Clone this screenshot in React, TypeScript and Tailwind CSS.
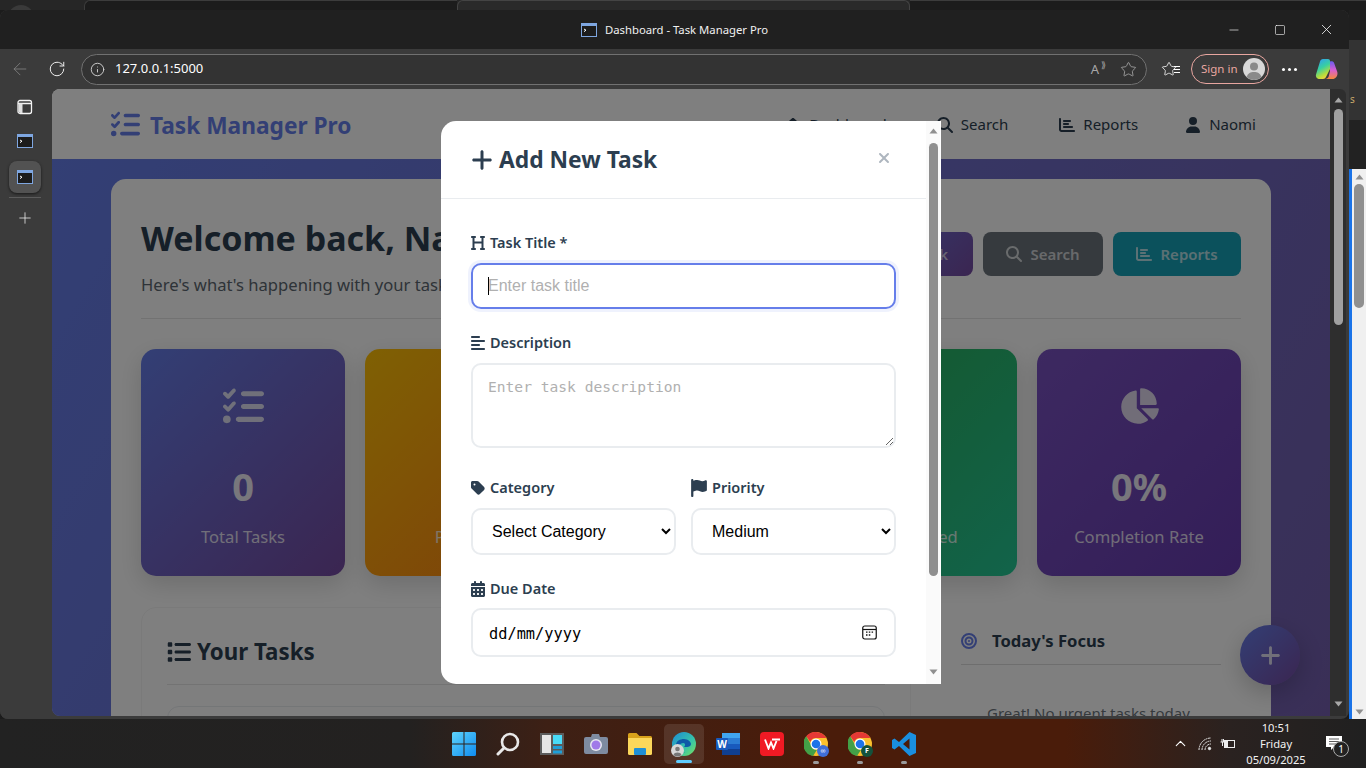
import React from "react";
import { ArrowLeft, RotateCw, Info, Star, Plus, X, Square, Minus, ChevronUp } from "lucide-react";
import { FaListCheck, FaPlus, FaHeading, FaAlignLeft, FaTag, FaFlag, FaCalendarDays, FaMagnifyingGlass, FaChartBar, FaUser, FaChartPie, FaList, FaBullseye, FaXmark, FaHouse, FaClock, FaSpinner, FaCircleCheck } from "react-icons/fa6";

const ui = { fontFamily: '"Noto Sans", "Liberation Sans", sans-serif' };

function TermIcon({ size = 16 }: { size?: number }) {
  return (
    <svg width={size} height={size} viewBox="0 0 16 16">
      <rect x="0.5" y="1.5" width="15" height="13" fill="#1c1c1c" stroke="#7ea6e0" />
      <rect x="0.5" y="1.5" width="15" height="2.5" fill="#7ea6e0" />
      <path d="M3 7l2 1.2L3 9.6" stroke="#fff" strokeWidth="1" fill="none" />
    </svg>
  );
}

function Triangle({ down, color = "#8f8f8f" }: { down?: boolean; color?: string }) {
  return (
    <svg width="9" height="6" viewBox="0 0 9 6">
      <path d={down ? "M0.5 0.5h8L4.5 5.5z" : "M4.5 0.5l4 5h-8z"} fill={color} />
    </svg>
  );
}

function TopStrip() {
  return (
    <div className="h-[10px] bg-[#262626] flex items-start shrink-0 overflow-hidden">
      <div className="ml-[8px] mt-[5px] w-[26px] h-[26px] rounded-full bg-[#3a3a3a] shrink-0" />
      <div className="ml-[50px] w-[300px] h-[10px] bg-[#1c1c1c] rounded-tl-[6px] border-t border-l border-[#3c3c3c]" />
      <div className="w-[76px] h-[10px] bg-[#1c1c1c] border-t border-[#3c3c3c]" />
      <div className="w-[458px] h-[10px] bg-[#2a2a2a] border-t border-l border-r border-[#444] rounded-t-[6px]" />
      <div className="w-[460px] h-[10px] bg-[#1c1c1c] border-t border-[#3c3c3c]" />
    </div>
  );
}

function TitleBar() {
  return (
    <div className="h-[39px] bg-[#202020] flex items-center relative shrink-0 pt-[1px]">
      <div className="flex-1 flex items-center justify-center gap-[8px] text-[11.3px] text-[#f0f0f0]" style={ui}>
        <TermIcon />
        <span>Dashboard - Task Manager Pro</span>
      </div>
      <div className="absolute right-0 top-0 h-full flex items-center text-white">
        <div className="w-[46px] flex justify-center"><Minus size={14} strokeWidth={1.1} /></div>
        <div className="w-[46px] flex justify-center"><Square size={12} strokeWidth={1.2} /></div>
        <div className="w-[46px] flex justify-center"><X size={17} strokeWidth={1.1} /></div>
      </div>
    </div>
  );
}

function Toolbar() {
  return (
    <div className="h-[40px] bg-[#3b3b3b] flex items-center shrink-0" style={ui}>
      <div className="w-[40px] flex justify-center"><ArrowLeft size={20} strokeWidth={0.9} color="#8a8a8a" /></div>
      <div className="w-[34px] flex justify-center pr-[1px]"><RotateCw size={18} strokeWidth={1.3} color="#f2f2f2" /></div>
      <div className="ml-[7px] w-[1066px] h-[31px] rounded-full border border-[#717171] bg-[#333333] flex items-center pl-[8px] pr-[9px]">
        <Info size={15} strokeWidth={1.4} color="#dcdcdc" />
        <span className="ml-[10px] text-[13px] text-white">127.0.0.1:5000</span>
        <span className="ml-auto mr-[21px] relative text-[13px] text-[#a8a8a8] leading-none">A<span className="absolute -top-[3px] left-[10px] text-[9px]">⟫</span></span>
        <Star size={17} strokeWidth={1.1} color="#b0b0b0" />
      </div>
      <div className="ml-[14px] relative">
        <Star size={16} strokeWidth={1.3} color="#f0f0f0" />
        <div className="absolute right-[-3px] top-[5px] flex flex-col gap-[2px]">
          <div className="w-[6px] h-[1px] bg-white" />
          <div className="w-[6px] h-[1px] bg-white" />
          <div className="w-[6px] h-[1px] bg-white" />
        </div>
      </div>
      <div className="ml-[14px] w-[78px] h-[30px] rounded-full border border-[#e8a6a0] flex items-center pl-[9px] pr-[3px] justify-between">
        <span className="text-[11.5px] text-[#eaa8a2]">Sign in</span>
        <svg width="22" height="22" viewBox="0 0 22 22">
          <circle cx="11" cy="11" r="11" fill="#d8d8d8" />
          <circle cx="11" cy="8.5" r="4" fill="#8a8a8a" />
          <path d="M3.5 19c1.5-4 4-5 7.5-5s6 1 7.5 5a11 11 0 0 1-15 0z" fill="#8a8a8a" />
        </svg>
      </div>
      <div className="ml-[13px] flex gap-[3px]">
        <div className="w-[3px] h-[3px] rounded-full bg-white" />
        <div className="w-[3px] h-[3px] rounded-full bg-white" />
        <div className="w-[3px] h-[3px] rounded-full bg-white" />
      </div>
      <svg className="ml-[18px]" width="23" height="22" viewBox="0 0 23 22">
        <defs>
          <linearGradient id="cp1" x1="0.2" y1="0" x2="0.6" y2="1"><stop offset="0" stopColor="#2f9ff0" /><stop offset="0.45" stopColor="#38d0a0" /><stop offset="0.8" stopColor="#b8dc3c" /><stop offset="1" stopColor="#f5d33f" /></linearGradient>
          <linearGradient id="cp2" x1="0.5" y1="0" x2="0.5" y2="1"><stop offset="0" stopColor="#6a5cf0" /><stop offset="0.5" stopColor="#d85fd0" /><stop offset="1" stopColor="#f58a3c" /></linearGradient>
        </defs>
        <path d="M8 1h5c1.2 0 2 .8 2 2v8l-4 8c-.6 1.3-1.5 2-3 2H5C2 21 .4 19 1 16.5L5 3.5C5.4 2 6.5 1 8 1z" fill="url(#cp1)" />
        <path d="M15 3.5c2-.5 3.5 0 4.2 1.800L22.3 14c.8 3.500-1.300 7-4.800 7H10c2 0 3-1 3.700-2.500L15 13z" fill="url(#cp2)" />
      </svg>
    </div>
  );
}

function Sidebar() {
  return (
    <div className="w-[52px] shrink-0 bg-[#3b3b3b] flex flex-col items-center pt-[10px] pr-[2px]">
      <svg width="16" height="16" viewBox="0 0 16 16">
        <rect x="1" y="1.5" width="13.5" height="13" rx="2" fill="none" stroke="#f4f4f4" strokeWidth="1.3" />
        <path d="M1 4.5h13.5" stroke="#f4f4f4" strokeWidth="1.3" />
        <path d="M1.5 4.5h4v9.500h-2a2 2 0 0 1-2-2z" fill="#e0e0e0" />
      </svg>
      <div className="mt-[18px]"><TermIcon /></div>
      <div className="mt-[12px] w-[32px] h-[32px] rounded-[8px] bg-[#525252] shadow-[0_1px_3px_rgba(0,0,0,0.6)] flex items-center justify-center"><TermIcon /></div>
      <div className="mt-[4px] w-[32px] h-[1px] bg-[#5c5c5c]" />
      <div className="mt-[11px]"><Plus size={18} strokeWidth={1} color="#f4f4f4" /></div>
    </div>
  );
}

function NavItem({ icon, label, className }: { icon: React.ReactNode; label: string; className: string }) {
  return (
    <div className={"flex items-center gap-[8px] text-[15px] text-[#2c3e50] " + className}>
      {icon}
      <span>{label}</span>
    </div>
  );
}

function Navbar() {
  return (
    <div className="h-[70px] bg-white flex items-center pl-[59px] pr-[74px] shrink-0">
      <FaListCheck size={29} className="text-[#667eea]" />
      <span className="ml-[10px] mt-[5px] text-[22.7px] font-bold text-[#667eea]">Task Manager Pro</span>
      <div className="ml-auto flex items-center mt-[1px]">
        <NavItem icon={<FaHouse size={16} />} label="Dashboard" className="mr-[50px]" />
        <NavItem icon={<FaMagnifyingGlass size={16} />} label="Search" className="mr-[51px]" />
        <NavItem icon={<FaChartBar size={16} />} label="Reports" className="mr-[47px]" />
        <NavItem icon={<FaUser size={16} />} label="Naomi" className="" />
      </div>
    </div>
  );
}

const stats = [
  { icon: <FaListCheck size={41} />, value: "0", label: "Total Tasks", bg: "bg-[linear-gradient(135deg,#667eea,#764ba2)]" },
  { icon: <FaClock size={41} />, value: "0", label: "Pending", bg: "bg-[linear-gradient(135deg,#ffc107,#fd7e14)]" },
  { icon: <FaSpinner size={41} />, value: "0", label: "In Progress", bg: "bg-[linear-gradient(135deg,#17a2b8,#6f42c1)]" },
  { icon: <FaCircleCheck size={41} />, value: "0", label: "Completed", bg: "bg-[linear-gradient(135deg,#2bae55,#24c795)]" },
  { icon: <FaChartPie size={40} />, value: "0%", label: "Completion Rate", bg: "bg-[linear-gradient(135deg,#7a52c2,#673cb0)]" },
];

function StatCard({ icon, value, label, bg }: { icon: React.ReactNode; value: string; label: string; bg: string }) {
  return (
    <div className={"w-[204px] h-[227px] rounded-[15px] flex flex-col items-center text-white shadow-[0_8px_25px_rgba(0,0,0,0.15)] pt-[37px] " + bg}>
      <div className="h-[40px] flex items-center opacity-80">{icon}</div>
      <div className="mt-[36px] text-[38px] leading-[48px] font-bold opacity-90">{value}</div>
      <div className="mt-[15px] text-[16.6px] leading-[24px] opacity-80">{label}</div>
    </div>
  );
}

function ActionButton({ icon, label, bg, w }: { icon: React.ReactNode; label: string; bg: string; w: string }) {
  return (
    <div className={"h-[44px] rounded-[8px] flex items-center justify-center gap-[8px] text-[15px] font-semibold text-white/70 " + bg + " " + w}>
      {icon}
      <span>{label}</span>
    </div>
  );
}

function Dashboard() {
  return (
    <div className="flex-1 min-h-0 overflow-hidden bg-[linear-gradient(120deg,#667eea,#745fae)] px-[59px] pt-[20px]">
      <div className="bg-white rounded-[15px] px-[30px] pt-[30px] h-[700px]">
        <div className="flex items-start justify-between h-[110px] border-b border-[#e4e4e4]">
          <div>
            <div className="text-[34px] leading-[58px] font-bold text-[#2c3e50] whitespace-nowrap">Welcome back, Naomi!</div>
            <div className="mt-[6px] text-[16.6px] leading-[24px] text-[#5c6770]">Here's what's happening with your tasks today</div>
          </div>
          <div className="flex gap-[10px] mt-[23px]">
            <ActionButton icon={<FaPlus size={15} />} label="Add Task" bg="bg-[linear-gradient(135deg,#667eea,#764ba2)]" w="w-[138px]" />
            <ActionButton icon={<FaMagnifyingGlass size={16} />} label="Search" bg="bg-[#6c757d]" w="w-[120px]" />
            <ActionButton icon={<FaChartBar size={16} />} label="Reports" bg="bg-[#17a2b8]" w="w-[128px]" />
          </div>
        </div>
        <div className="mt-[30px] flex gap-[20px]">
          {stats.map((s) => <StatCard key={s.label} {...s} />)}
        </div>
        <div className="mt-[31px] grid grid-cols-[770px_300px] gap-[30px]">
          <div className="border border-[#f4f4f4] rounded-[15px] px-[25px] pt-[25px] h-[200px]">
            <div className="flex items-center gap-[6px] h-[38px] text-[22.3px] font-bold text-[#2c3e50]"><FaList size={24} />Your Tasks</div>
            <div className="mt-[13px] h-[1px] bg-[#e6e6e6]" />
            <div className="mt-[21px] h-[60px] border border-[#e9ecef] rounded-[12px]" />
          </div>
          <div className="pl-[20px] pr-[20px] pt-[20px]">
            <div className="flex items-center gap-[15px] h-[28px] text-[16.6px] font-bold text-[#2c3e50]"><FaBullseye size={16} className="text-[#667eea]" />Today's Focus</div>
            <div className="mt-[9px] h-[1px] bg-[#dcdcdc]" />
            <div className="mt-[36px] pl-[26px] text-[15px] leading-[24px] text-[#6c757d] whitespace-nowrap">Great! No urgent tasks today</div>
          </div>
        </div>
      </div>
    </div>
  );
}

function Label({ icon, text, className = "" }: { icon: React.ReactNode; text: string; className?: string }) {
  return (
    <div className={"h-[24px] -ml-[1px] flex items-center gap-[4px] text-[14.5px] font-semibold text-[#2c3e50] " + className}>
      {icon}
      <span>{text}</span>
    </div>
  );
}

const arial = { fontFamily: '"Liberation Sans", Arial, sans-serif' };
const mono = { fontFamily: '"DejaVu Sans Mono", monospace' };

function Modal() {
  return (
    <div className="w-[500px] h-[563px] bg-white rounded-l-[15px] overflow-hidden flex" style={ui}>
      <div className="w-[485px] shrink-0 flex flex-col">
        <div className="h-[78px] border-b border-[#e9ecef] flex items-center px-[30px] shrink-0">
          <FaPlus size={24} className="-ml-[1px] text-[#2c3e50]" />
          <span className="ml-[5px] mt-[1px] text-[22.8px] font-bold text-[#2c3e50]">Add New Task</span>
          <FaXmark size={16} className="ml-auto mr-[4px] -mt-[4px] text-[#aeb6bf]" />
        </div>
        <div className="px-[30px] pt-[32px]">
          <Label icon={<FaHeading size={16} />} text="Task Title *" />
          <div className="relative mt-[8px]">
            <input
              autoFocus
              placeholder="Enter task title"
              className="block w-full h-[46px] rounded-[10px] border-2 border-[#667eea] px-[15px] text-[16px] outline-none caret-transparent shadow-[0_0_0_3px_rgba(102,126,234,0.1)] placeholder:text-[#b0b0b0]"
              style={arial}
            />
            <div className="absolute left-[17px] top-[14px] w-[1px] h-[18px] bg-black" />
          </div>
          <Label icon={<FaAlignLeft size={16} />} text="Description" className="mt-[22px]" />
          <textarea
            placeholder="Enter task description"
            className="mt-[8px] block w-full h-[85px] rounded-[10px] border-2 border-[#e9ecef] px-[15px] pt-[11px] pb-[12px] text-[14.6px] outline-none placeholder:text-[#b0b0b0]"
            style={mono}
          />
          <div className="mt-[28px] grid grid-cols-2 gap-[15px]">
            <div>
              <Label icon={<FaTag size={16} />} text="Category" />
              <select className="mt-[8px] block w-full h-[47px] rounded-[10px] border-2 border-[#e9ecef] px-[15px] text-[16px] text-black outline-none" style={arial}>
                <option>Select Category</option>
              </select>
            </div>
            <div>
              <Label icon={<FaFlag size={18} />} text="Priority" />
              <select className="mt-[8px] block w-full h-[47px] rounded-[10px] border-2 border-[#e9ecef] px-[15px] text-[16px] text-black outline-none" style={arial}>
                <option>Medium</option>
              </select>
            </div>
          </div>
          <Label icon={<FaCalendarDays size={16} />} text="Due Date" className="mt-[22px]" />
          <div className="mt-[7px] h-[49px] rounded-[10px] border-2 border-[#e9ecef] pl-[16px] pr-[17px] flex items-center justify-between">
            <span className="mt-[4px] text-[15.3px] text-black" style={mono}>dd/mm/yyyy</span>
            <svg width="15" height="15" viewBox="0 0 15 15">
              <rect x="0.75" y="1" width="13.5" height="13" rx="2" fill="none" stroke="#111" strokeWidth="1.2" />
              <path d="M1 4.5h13" stroke="#111" strokeWidth="1.2" />
              <path d="M4 7.2h1.5M6.8 7.2h1.5M9.6 7.2h1.5M4 10h1.5M6.8 10h1.5" stroke="#111" strokeWidth="1.3" />
            </svg>
          </div>
        </div>
      </div>
      <div className="flex-1 flex">
        <div className="w-[14px] bg-[#fafafa] flex flex-col items-center pt-[7px] pb-[9px]">
          <Triangle />
          <div className="mt-[9px] w-[9px] h-[433px] rounded-full bg-[#8f8f8f]" />
          <div className="mt-auto"><Triangle down /></div>
        </div>
        <div className="flex-1 bg-white" />
      </div>
    </div>
  );
}

function PageScrollbar() {
  return (
    <div className="w-[16px] shrink-0 bg-[#2e2e2e] flex flex-col items-center pt-[8px] pb-[9px] rounded-tr-[6px]">
      <Triangle color="#a8a8a8" />
      <div className="mt-[6px] w-[9px] h-[216px] rounded-full bg-[#a0a0a0]" />
      <div className="mt-auto"><Triangle down color="#a8a8a8" /></div>
    </div>
  );
}

function BrowserWindow() {
  return (
    <div className="w-[1349px] shrink-0 flex flex-col bg-[#3b3b3b] rounded-t-[8px] rounded-b-[8px] overflow-hidden">
      <TitleBar />
      <Toolbar />
      <div className="flex-1 min-h-0 flex">
        <Sidebar />
        <div className="flex-1 min-w-0 flex pb-[3px] pr-[3px]">
          <div className="w-[1278px] shrink-0 relative flex flex-col overflow-hidden rounded-tl-[8px] rounded-bl-[8px]" style={ui}>
            <Navbar />
            <Dashboard />
            <div className="absolute right-[30px] bottom-[31px] w-[60px] h-[60px] rounded-full bg-[linear-gradient(135deg,#667eea,#764ba2)] flex items-center justify-center text-white shadow-[0_8px_25px_rgba(0,0,0,0.2)]">
              <FaPlus size={23} className="opacity-80" />
            </div>
            <div className="absolute inset-0 bg-black/50 flex items-center justify-center">
              <Modal />
            </div>
          </div>
          <PageScrollbar />
        </div>
      </div>
    </div>
  );
}

function RightEdge() {
  return (
    <div className="flex-1 flex flex-col relative overflow-hidden" style={ui}>
      <div className="h-[30px] bg-[#1f1f1f] shrink-0" />
      <div className="h-[80px] bg-[#333333] shrink-0 text-[10px] text-[#c9a86a] pt-[52px] pl-[1px]">s</div>
      <div className="h-[49px] bg-[#222222] shrink-0" />
      <div className="flex-1 flex bg-white">
        <div className="w-[3px] bg-[#1a73e8]" />
        <div className="flex-1 bg-[#f0f0f0] flex flex-col items-center pt-[5px] pb-[4px]">
          <Triangle />
          <div className="mt-[4px] w-[10px] h-[124px] rounded-full bg-[#8f8f8f]" />
          <div className="mt-auto"><Triangle down /></div>
        </div>
      </div>
    </div>
  );
}

function TaskIcon({ children, active, dot }: { children: React.ReactNode; active?: boolean; dot?: boolean }) {
  return (
    <div className={"relative w-[40px] h-[40px] rounded-[5px] flex items-center justify-center mx-[2px] " + (active ? "bg-white/10" : "")}>
      {children}
      {active && <div className="absolute bottom-[1px] left-[12px] w-[16px] h-[3px] rounded-full bg-[#60cdff]" />}
      {dot && <div className="absolute bottom-[0px] left-[17px] w-[6px] h-[3px] rounded-full bg-[#9a9a9a]" />}
    </div>
  );
}

function Chrome({ badge }: { badge: React.ReactNode }) {
  return (
    <div className="relative w-[24px] h-[24px]">
      <svg width="24" height="24" viewBox="0 0 24 24">
        <circle cx="12" cy="12" r="12" fill="#fbc02d" />
        <path d="M12 0a12 12 0 0 1 10.4 6H12a6 6 0 0 0-5.7 4.1L2.2 4.3A12 12 0 0 1 12 0z" fill="#e53935" />
        <path d="M2.2 4.3l5.2 9.3a5.5 5.5 0 0 0 5.5 4.3L9 24A12 12 0 0 1 2.2 4.3z" fill="#43a047" />
        <circle cx="12" cy="12" r="5.5" fill="#fff" />
        <circle cx="12" cy="12" r="4.3" fill="#1e73e8" />
      </svg>
      {badge}
    </div>
  );
}

function Taskbar() {
  return (
    <div className="h-[49px] shrink-0 flex items-center relative bg-[linear-gradient(90deg,#222222_0%,#232120_30%,#3d2015_40%,#4a1c0a_60%,#4a1c0a_78%,#2a2220_90%,#202020_100%)]" style={ui}>
      <div className="flex items-center ml-[442px]">
        <TaskIcon>
          <svg width="24" height="24" viewBox="0 0 24 24">
            <defs><linearGradient id="win" x1="0" y1="0" x2="1" y2="1"><stop offset="0" stopColor="#5ed4fb" /><stop offset="1" stopColor="#0f8cf0" /></linearGradient></defs>
            <path d="M0 1.5A1.5 1.5 0 0 1 1.5 0h10v11.5H0zM12.5 0h10A1.5 1.5 0 0 1 24 1.5v10H12.5zM0 12.5h11.5V24h-10A1.5 1.5 0 0 1 0 22.5zM12.5 12.5H24v10a1.5 1.5 0 0 1-1.5 1.5h-10z" fill="url(#win)" />
          </svg>
        </TaskIcon>
        <TaskIcon>
          <svg width="24" height="24" viewBox="0 0 24 24" fill="none">
            <circle cx="14" cy="10" r="8" stroke="#e8e8e8" strokeWidth="2.6" />
            <path d="M8 16l-6 6" stroke="#e8e8e8" strokeWidth="3" strokeLinecap="round" />
          </svg>
        </TaskIcon>
        <TaskIcon>
          <svg width="24" height="22" viewBox="0 0 24 22">
            <rect width="24" height="22" fill="#5c5c5c" />
            <rect x="2" y="2" width="9" height="18" fill="#e6e6e6" />
            <rect x="13" y="2" width="9" height="9" fill="#49dcf8" />
            <rect x="13" y="13" width="9" height="3" fill="#1e9fd8" />
            <rect x="13" y="17.5" width="9" height="3" fill="#1e9fd8" />
          </svg>
        </TaskIcon>
        <TaskIcon>
          <svg width="24" height="20" viewBox="0 0 24 20">
            <path d="M2 3h5l1-3h7l1 3h6a2 2 0 0 1 2 2v13a2 2 0 0 1-2 2H2a2 2 0 0 1-2-2V5a2 2 0 0 1 2-2z" fill="#7e8ba0" />
            <circle cx="12" cy="11" r="6" fill="#e8e8f0" />
            <circle cx="12" cy="11" r="4.5" fill="#a07ae8" />
          </svg>
        </TaskIcon>
        <TaskIcon>
          <svg width="24" height="22" viewBox="0 0 24 22">
            <path d="M0 1.5A1.5 1.5 0 0 1 1.5 0h7l3 3h11A1.5 1.5 0 0 1 24 4.5V6H0z" fill="#d9a21b" />
            <path d="M0 5h24v15.5a1.5 1.5 0 0 1-1.5 1.5h-21A1.5 1.5 0 0 1 0 20.5z" fill="#fbd75b" />
            <rect x="6" y="15" width="12" height="7" rx="1" fill="#1f8fd6" />
          </svg>
        </TaskIcon>
        <TaskIcon active>
          <div className="relative w-[24px] h-[24px]">
            <svg width="24" height="24" viewBox="0 0 24 24">
              <defs><linearGradient id="edge" x1="0" y1="0" x2="1" y2="1"><stop offset="0" stopColor="#1c8ad6" /><stop offset="0.6" stopColor="#37c4a8" /><stop offset="1" stopColor="#7ee05a" /></linearGradient></defs>
              <circle cx="12" cy="12" r="12" fill="url(#edge)" />
              <path d="M4 13c0-4 4-6 8-6s7 3 7 5c0 2-2 3-4 3h-3c2-2 1-4-1-4-3 0-4 3-3 6 1 2 4 4 8 4a12 12 0 0 1-12-8z" fill="#0e5aa8" />
            </svg>
            <svg className="absolute left-[-1px] bottom-[-1px]" width="13" height="13" viewBox="0 0 13 13">
              <circle cx="6.5" cy="6.5" r="6.5" fill="#d8d8d8" />
              <circle cx="6.5" cy="5" r="2.3" fill="#777" />
              <path d="M2.5 11c.6-2 2-2.6 4-2.6s3.4.6 4 2.6a6.5 6.5 0 0 1-8 0z" fill="#777" />
            </svg>
          </div>
        </TaskIcon>
        <TaskIcon>
          <div className="relative w-[24px] h-[22px]">
            <div className="absolute right-0 top-0 w-[18px] h-[22px] flex flex-col">
              <div className="flex-1 bg-[#41a5ee]" />
              <div className="flex-1 bg-[#2b7cd3]" />
              <div className="flex-1 bg-[#185abd]" />
              <div className="flex-1 bg-[#103f91]" />
            </div>
            <div className="absolute left-0 top-[5px] w-[12px] h-[12px] bg-[#185abd] rounded-[1px] flex items-center justify-center text-[10px] leading-none font-bold text-white">W</div>
          </div>
        </TaskIcon>
        <TaskIcon>
          <div className="w-[24px] h-[24px] rounded-[4px] bg-[#f01a24] flex items-center justify-center">
            <svg width="17" height="12" viewBox="0 0 17 12" fill="none">
              <path d="M1 1.5l3.5 9 2.5-6 2.5 6 3-7.5M8 1.5h8" stroke="#fff" strokeWidth="1.9" />
            </svg>
          </div>
        </TaskIcon>
        <TaskIcon dot>
          <Chrome badge={<div className="absolute -right-[1px] -bottom-[1px] w-[12px] h-[12px] rounded-full bg-[#3f6fd8] flex items-center justify-center text-[7px] leading-none text-white">∞</div>} />
        </TaskIcon>
        <TaskIcon dot>
          <Chrome badge={<div className="absolute -right-[1px] -bottom-[1px] w-[12px] h-[12px] rounded-full bg-[#14523c] flex items-center justify-center text-[7px] leading-none font-bold text-white">F</div>} />
        </TaskIcon>
        <TaskIcon dot>
          <svg width="24" height="24" viewBox="0 0 24 24">
            <path d="M17.5 0L24 3v18l-6.5 3L7 14l-4.5 3.5L0 16V8l2.5-1.5L7 10zM17.5 6.5L11 12l6.5 5.5z" fill="#1a8fe0" />
          </svg>
        </TaskIcon>
      </div>
      <div className="absolute right-0 top-0 h-full flex items-center text-white">
        <ChevronUp size={17} strokeWidth={1.5} className="mr-[9px]" />
        <svg className="mr-[8px]" width="14" height="14" viewBox="0 0 14 14" fill="none" stroke="#e8e8e8" strokeWidth="1">
          <path d="M1 13A12 12 0 0 1 13 1M4 13A9 9 0 0 1 13 4M7 13A6 6 0 0 1 13 7" strokeDasharray="2 0.6" />
          <circle cx="11.5" cy="11.5" r="1.2" fill="#e8e8e8" />
        </svg>
        <svg className="mr-[10px]" width="16" height="12" viewBox="0 0 16 12" fill="none" stroke="#eee" strokeWidth="1">
          <rect x="4.5" y="2.5" width="10" height="7" />
          <rect x="4.5" y="2.5" width="3" height="7" fill="#eee" />
          <path d="M0.5 4h4M2 1v3M3.5 1v3M2.5 4v4" />
        </svg>
        <div className="w-[60px] flex flex-col items-center text-[11.2px] leading-[16px] text-[#f2f2f2]">
          <span>10:51</span>
          <span>Friday</span>
          <span>05/09/2025</span>
        </div>
        <div className="relative ml-[20px] mr-[24px]">
          <svg width="16" height="15" viewBox="0 0 16 15">
            <path d="M0 0h16v11H8l-3 3v-3H0z" fill="#fff" />
            <path d="M3 3h10M3 5.5h10M3 8h7" stroke="#333" strokeWidth="0.8" />
          </svg>
          <div className="absolute -right-[7px] -bottom-[6px] w-[16px] h-[16px] rounded-full border border-[#aaa] bg-[#222] flex items-center justify-center text-[10px] leading-none">1</div>
        </div>
      </div>
    </div>
  );
}

export default function App() {
  return (
    <div className="w-[1366px] h-[768px] overflow-hidden flex flex-col bg-[#1c1c1c]" style={ui}>
      <TopStrip />
      <div className="h-[709px] flex shrink-0">
        <BrowserWindow />
        <RightEdge />
      </div>
      <Taskbar />
    </div>
  );
}
